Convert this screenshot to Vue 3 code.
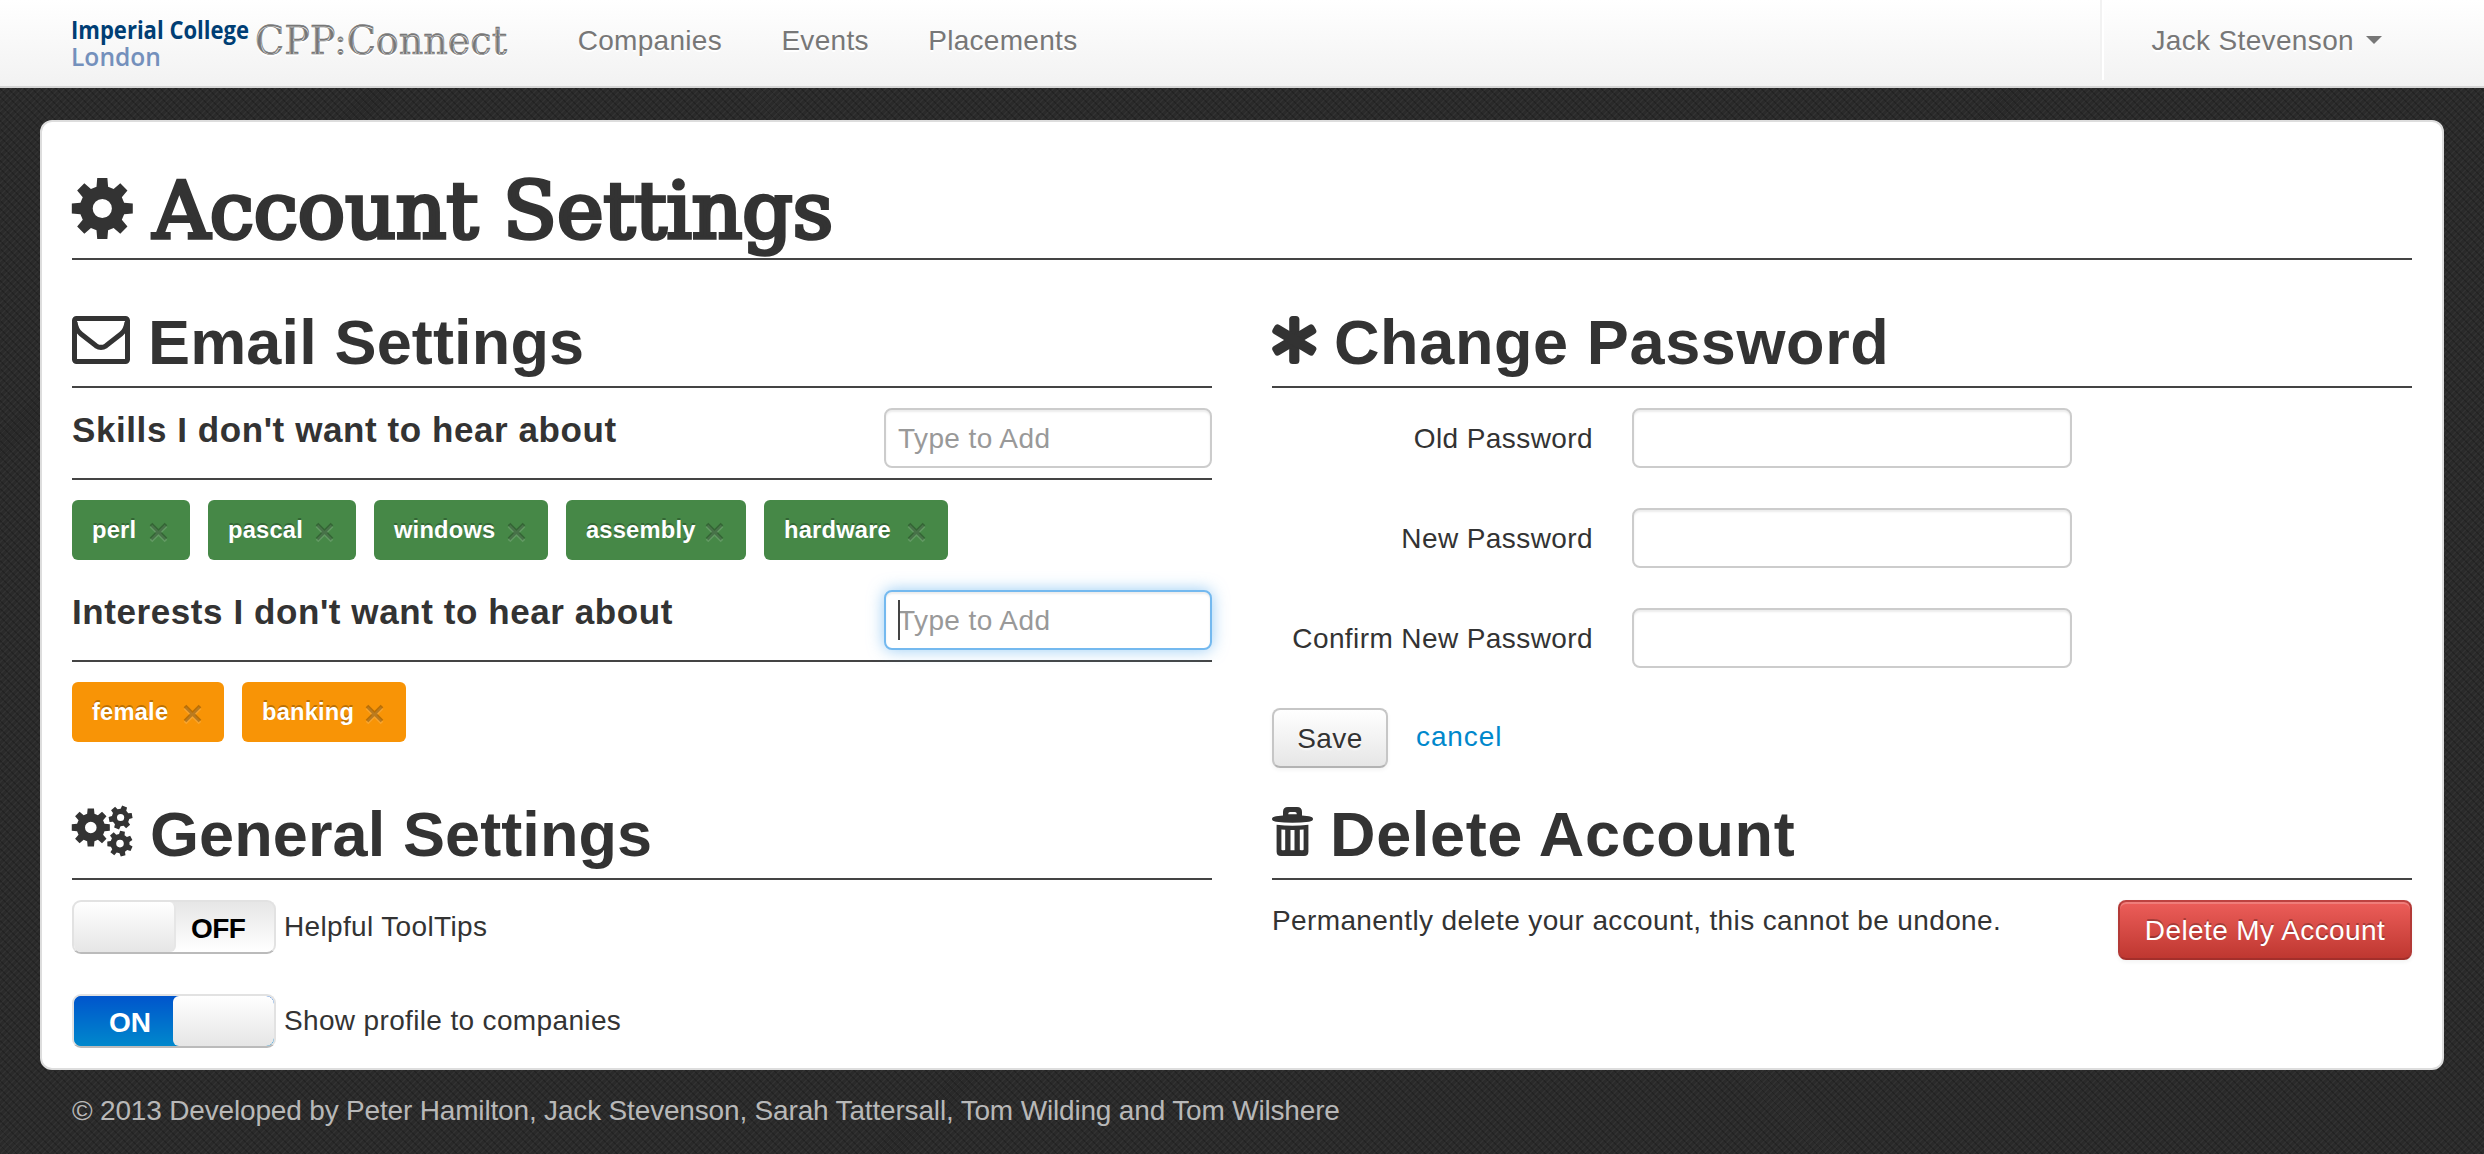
<script setup>
import { ref } from 'vue'

const links = ['Companies', 'Events', 'Placements']

const skills = ref([
  { name: 'perl', width: 118 },
  { name: 'pascal', width: 148 },
  { name: 'windows', width: 174 },
  { name: 'assembly', width: 180 },
  { name: 'hardware', width: 184 },
])
const interests = ref([
  { name: 'female', width: 152 },
  { name: 'banking', width: 164 },
])
const passwords = ['Old Password', 'New Password', 'Confirm New Password']
const toggles = ref([
  { label: 'Helpful ToolTips', on: false },
  { label: 'Show profile to companies', on: true },
])

// Outline of a cog wheel with trapezoid teeth and a round hole.
function cog(cx, cy, outer, inner, hole, teeth, turn = 0) {
  const step = (Math.PI * 2) / teeth
  const point = (r, a) =>
    `${(cx + r * Math.sin(a)).toFixed(2)} ${(cy - r * Math.cos(a)).toFixed(2)}`
  let d = ''
  for (let i = 0; i < teeth; i++) {
    const a = i * step + turn
    const corners = [
      point(inner, a - step * 0.33),
      point(outer, a - step * 0.21),
      point(outer, a + step * 0.21),
      point(inner, a + step * 0.33),
    ]
    d += (i ? 'L' : 'M') + corners.join('L')
  }
  return `${d}ZM${cx - hole} ${cy}a${hole} ${hole} 0 1 0 ${hole * 2} 0a${hole} ${hole} 0 1 0 ${-hole * 2} 0Z`
}

const bigCog = cog(30.3, 30.5, 30.9, 22.6, 9.6, 8)
const cogs =
  cog(18.8, 21.5, 19.3, 14.2, 5.8, 8) +
  cog(48.6, 11.5, 12, 8.8, 3.6, 6, 0.35) +
  cog(48, 37.6, 12.9, 9.6, 3.8, 7, 0.2)
</script>

<template>
  <div class="page">
    <header class="navbar">
      <a class="brand">
        <svg class="logo" width="176" height="52" viewBox="0 0 176 52">
          <text class="logo-top" x="-1" y="20" textLength="178" lengthAdjust="spacingAndGlyphs">Imperial College</text>
          <text class="logo-bottom" x="-1" y="46.5" textLength="90" lengthAdjust="spacingAndGlyphs">London</text>
        </svg>
        <svg class="brand-name" width="252" height="52" viewBox="0 0 252 52">
          <text x="0" y="35" textLength="252" lengthAdjust="spacingAndGlyphs">CPP:Connect</text>
        </svg>
      </a>
      <nav class="links">
        <a v-for="link in links" :key="link">{{ link }}</a>
      </nav>
      <a class="user">Jack Stevenson<span class="arrow"></span></a>
    </header>

    <main class="card">
      <h1>
        <svg class="icon" width="61" height="61" viewBox="0 0 61 61"><path :d="bigCog" fill-rule="evenodd" /></svg>
        <svg class="title" width="680" height="61" viewBox="0 0 680 61">
          <text x="1" y="60" textLength="680" lengthAdjust="spacingAndGlyphs">Account Settings</text>
        </svg>
      </h1>

      <div class="grid">
        <section>
          <h2 class="email">
            <svg class="icon" width="58" height="48" viewBox="0 0 58 48">
              <rect class="line" x="2.5" y="2.5" width="53" height="43" rx="2" />
              <path class="line" d="M3 6Q4 14 9 18L24 29.8Q29 33 34 29.8L49 18Q54 14 55 6" />
            </svg>
            Email Settings
          </h2>
          <div class="sub first">
            <h3>Skills I don't want to hear about</h3>
            <div class="field"><input placeholder="Type to Add" /></div>
          </div>
          <div class="tags">
            <span v-for="tag in skills" :key="tag.name" class="tag green" :style="{ width: tag.width + 'px' }">
              {{ tag.name }}
              <svg width="19" height="21" viewBox="0 0 19 21">
                <path class="cross-light" d="M2 4L17 19M17 4L2 19" />
                <path class="cross" d="M2 2L17 17M17 2L2 17" />
              </svg>
            </span>
          </div>
          <div class="sub">
            <h3>Interests I don't want to hear about</h3>
            <div class="field focused">
              <input placeholder="Type to Add" />
              <span class="cursor"></span>
            </div>
          </div>
          <div class="tags">
            <span v-for="tag in interests" :key="tag.name" class="tag orange" :style="{ width: tag.width + 'px' }">
              {{ tag.name }}
              <svg width="19" height="21" viewBox="0 0 19 21">
                <path class="cross-light" d="M2 4L17 19M17 4L2 19" />
                <path class="cross" d="M2 2L17 17M17 2L2 17" />
              </svg>
            </span>
          </div>
        </section>

        <section>
          <h2 class="password">
            <svg class="icon" width="45" height="48" viewBox="0 0 45 48">
              <rect x="17.2" y="0" width="10.2" height="48" rx="3.5" />
              <rect x="17" y="0" width="10.6" height="48" rx="3.5" transform="rotate(59 22.3 24)" />
              <rect x="17" y="0" width="10.6" height="48" rx="3.5" transform="rotate(-59 22.3 24)" />
            </svg>
            Change Password
          </h2>
          <form class="form" @submit.prevent>
            <label v-for="name in passwords" :key="name" class="row">
              <span>{{ name }}</span>
              <input type="password" />
            </label>
            <div class="actions">
              <button class="btn">Save</button>
              <a class="cancel">cancel</a>
            </div>
          </form>
        </section>

        <section>
          <h2 class="general">
            <svg class="icon low" width="60" height="50" viewBox="0 0 60 50"><path :d="cogs" fill-rule="evenodd" /></svg>
            General Settings
          </h2>
          <div class="toggles">
            <div v-for="t in toggles" :key="t.label" class="toggle-row">
              <span class="toggle" :class="{ on: t.on }" @click="t.on = !t.on">
                <b v-if="t.on">ON</b>
                <i class="knob"></i>
                <b v-if="!t.on">OFF</b>
              </span>
              <span class="toggle-label">{{ t.label }}</span>
            </div>
          </div>
        </section>

        <section>
          <h2 class="delete">
            <svg class="icon" width="41" height="49" viewBox="0 0 41 49">
              <path fill-rule="evenodd" d="M11 8.5V5Q11 0 16 0H25Q30 0 30 5V8.5L37 9.3Q41 10 41 12Q41 14 37 14.7Q20.5 17 4 14.7Q0 14 0 12Q0 10 4 9.3ZM16.3 7.3H24.7V6.6Q24.7 5 23 5H18Q16.3 5 16.3 6.6Z" />
              <path fill-rule="evenodd" d="M4.6 17.7Q20.5 20 36.4 17.7V44.5Q36.4 49 32 49H9Q4.6 49 4.6 44.5ZM9.4 22.5V42.7Q11.3 43.8 13.2 42.7V22.8ZM18.5 23V43.2H22.5V23ZM27.8 22.8V42.7Q29.7 43.8 31.6 42.7V22.5Z" />
            </svg>
            Delete Account
          </h2>
          <div class="danger-row">
            <p>Permanently delete your account, this cannot be undone.</p>
            <button class="btn danger">Delete My Account</button>
          </div>
        </section>
      </div>
    </main>

    <footer>© 2013 Developed by Peter Hamilton, Jack Stevenson, Sarah Tattersall, Tom Wilding and Tom Wilshere</footer>
  </div>
</template>

<style>
body {
  margin: 0;
  background: #292929;
}
</style>

<style scoped>
* {
  box-sizing: border-box;
}
.page {
  height: 1154px;
  overflow: hidden;
  font: 28px/40px 'Liberation Sans', Arial, sans-serif;
  letter-spacing: 0.41px;
  color: #333;
  background:
    repeating-linear-gradient(45deg, rgba(0, 0, 0, 0.17) 0 1.4px, transparent 1.4px 5.66px),
    repeating-linear-gradient(-45deg, rgba(255, 255, 255, 0.035) 0 1.4px, transparent 1.4px 4.24px),
    #2a2a2a;
}
.navbar {
  display: flex;
  height: 88px;
  padding: 0 72px;
  border-bottom: 2px solid #d4d4d4;
  background: linear-gradient(#fff, #f2f2f2);
  color: #777;
  text-shadow: 0 2px 0 #fff;
}
.brand {
  display: flex;
  width: 476px;
  padding-top: 19px;
}
.logo,
.brand-name {
  overflow: visible;
}
.logo text {
  font-family: 'Open Sans', 'Noto Sans', sans-serif;
  font-size: 25.5px;
  letter-spacing: 0;
  text-shadow: none;
}
.logo-top {
  font-weight: 700;
  fill: #003e74;
}
.logo-bottom {
  font-weight: 600;
  fill: #7490bc;
}
.brand-name {
  margin-left: 7px;
}
.brand-name text {
  font-family: 'DejaVu Serif Condensed', 'DejaVu Serif', serif;
  font-size: 40px;
  letter-spacing: 0;
  fill: #777;
  stroke: #777;
  stroke-width: 0.6px;
}
.links {
  display: flex;
  letter-spacing: 0.3px;
}
.links a {
  padding: 21px 29.7px 0;
}
.user {
  display: flex;
  height: 80px;
  margin-left: auto;
  margin-right: -2px;
  padding: 21px 32px 0 49px;
  border-left: 2px solid #f2f2f2;
  box-shadow: inset 2px 0 0 #fff;
  letter-spacing: 0.35px;
}
.arrow {
  margin: 15px 0 0 12px;
  width: 0;
  height: 0;
  border: 8px solid transparent;
  border-top-color: #777;
  border-bottom: 0;
}
.card {
  height: 950px;
  margin: 32px 40px 0;
  padding: 40px 30px 0;
  border: 2px solid #ddd;
  border-radius: 12px;
  background: #fff;
}
.icon {
  flex: none;
  overflow: visible;
  fill: #333;
}
.line {
  fill: none;
  stroke: #333;
  stroke-width: 5;
}
h1 {
  display: flex;
  align-items: flex-end;
  gap: 19px;
  height: 98px;
  margin: 0 0 42px;
  padding-bottom: 19px;
  border-bottom: 2px solid #444;
}
.title {
  overflow: visible;
}
.title text {
  font-family: 'DejaVu Serif Condensed', 'DejaVu Serif', serif;
  font-size: 78px;
  font-weight: 400;
  letter-spacing: 0;
  fill: #333;
  stroke: #333;
  stroke-width: 3.6px;
}
.grid {
  display: grid;
  grid-template-columns: 1140px 1140px;
  grid-template-rows: 492px auto;
  column-gap: 60px;
}
h2 {
  display: flex;
  align-items: baseline;
  gap: 18px;
  height: 86px;
  margin: 0;
  border-bottom: 2px solid #444;
  font-size: 63px;
  line-height: 80px;
  white-space: nowrap;
}
.email {
  letter-spacing: 0.15px;
}
.password {
  gap: 17px;
  letter-spacing: 0.62px;
}
.general {
  letter-spacing: 0.1px;
}
.delete {
  gap: 17px;
  letter-spacing: 0.65px;
}
.low {
  margin-bottom: -1px;
}
.sub {
  display: flex;
  justify-content: space-between;
  align-items: flex-start;
  margin-top: 30px;
  padding-bottom: 10px;
  border-bottom: 2px solid #444;
}
.sub.first {
  margin-top: 20px;
}
h3 {
  margin: 2px 0 0;
  font-size: 35px;
  line-height: 40px;
  letter-spacing: 0.58px;
}
.field {
  position: relative;
  width: 328px;
}
input {
  display: block;
  width: 100%;
  height: 60px;
  padding: 9px 12px 7px;
  border: 2px solid #ccc;
  border-radius: 8px;
  outline: none;
  background: #fff;
  box-shadow: inset 0 2px 2px rgba(0, 0, 0, 0.075);
  font: inherit;
  letter-spacing: inherit;
}
input::placeholder {
  color: #999;
}
.focused input {
  border-color: #74b9ef;
  box-shadow: inset 0 2px 2px rgba(0, 0, 0, 0.075), 0 0 16px rgba(82, 168, 236, 0.6);
}
.cursor {
  position: absolute;
  left: 14px;
  top: 10px;
  width: 2px;
  height: 40px;
  background: #444;
}
.tags {
  display: flex;
  gap: 18px;
  margin-top: 20px;
}
.tag {
  display: flex;
  justify-content: space-between;
  align-items: center;
  height: 60px;
  padding: 0 22px 0 20px;
  border-radius: 6px;
  color: #fff;
  font-size: 23.7px;
  font-weight: 700;
  letter-spacing: 0.2px;
  text-shadow: 0 -2px 0 rgba(0, 0, 0, 0.25);
}
.tag svg {
  margin-top: 5px;
}
.green {
  background: #468847;
}
.orange {
  background: #f89406;
}
.cross,
.cross-light {
  fill: none;
  stroke-width: 3.8;
}
.cross {
  stroke: rgba(0, 0, 0, 0.25);
}
.cross-light {
  stroke: rgba(255, 255, 255, 0.15);
}
.form {
  padding-top: 20px;
}
.row {
  display: flex;
  align-items: center;
  gap: 40px;
  margin-bottom: 40px;
}
.row span {
  width: 320px;
  padding-top: 2px;
  margin-right: -1px;
  margin-left: 1px;
  text-align: right;
}
.row input {
  width: 440px;
}
.actions {
  display: flex;
}
.btn {
  height: 60px;
  padding: 2px 24px 0;
  border: 2px solid #c6c6c6;
  border-bottom-color: #b3b3b3;
  border-radius: 8px;
  background: linear-gradient(#fff, #e6e6e6);
  box-shadow: inset 0 2px 0 rgba(255, 255, 255, 0.2), 0 2px 4px rgba(0, 0, 0, 0.05);
  color: #333;
  font: inherit;
  letter-spacing: inherit;
  text-shadow: 0 2px 2px rgba(255, 255, 255, 0.75);
  white-space: nowrap;
}
.actions .btn {
  width: 116px;
  padding: 2px 0 0;
}
.cancel {
  margin-left: 28px;
  padding-top: 9px;
  color: #08c;
  letter-spacing: 0.9px;
}
.toggles {
  display: flex;
  flex-direction: column;
  gap: 40px;
  margin-top: 20px;
}
.toggle-row {
  display: flex;
  gap: 8px;
}
.toggle {
  display: flex;
  overflow: hidden;
  width: 204px;
  height: 54px;
  border: 2px solid #e2e2e2;
  border-bottom-color: #bbb;
  border-radius: 9px;
  background: linear-gradient(#e6e6e6, #fff);
  color: #000;
}
.toggle b {
  width: 98px;
  padding: 8px 0 0 15px;
  line-height: 37px;
  letter-spacing: -0.6px;
}
.toggle.on b {
  width: 99px;
  padding-left: 35px;
  background: linear-gradient(#05c, #08c);
  color: #fff;
  letter-spacing: 0;
}
.knob {
  width: 102px;
  border-right: 2px solid #e6e6e6;
  border-radius: 6px;
  background: linear-gradient(#fff, #e6e6e6);
}
.toggle.on {
  background: linear-gradient(#05c, #08c);
  background-clip: padding-box;
}
.on .knob {
  border-right: 0;
  border-radius: 6px 8px 8px 6px;
}
.toggle-label {
  padding-top: 7px;
  letter-spacing: 0.35px;
}
.danger-row {
  display: flex;
  justify-content: space-between;
  align-items: flex-start;
  margin-top: 20px;
}
.danger-row p {
  margin: 1px 0 0;
  letter-spacing: 0.38px;
}
.btn.danger {
  width: 294px;
  border-color: #bd4240 #b33a37 #a32f2b;
  background: linear-gradient(#ee5f5b, #bd362f);
  background-origin: border-box;
  color: #fff;
  text-shadow: 0 -2px 0 rgba(0, 0, 0, 0.25);
}
footer {
  margin: 21px 72px 0;
  color: #b8b8b8;
  letter-spacing: -0.17px;
}
</style>
